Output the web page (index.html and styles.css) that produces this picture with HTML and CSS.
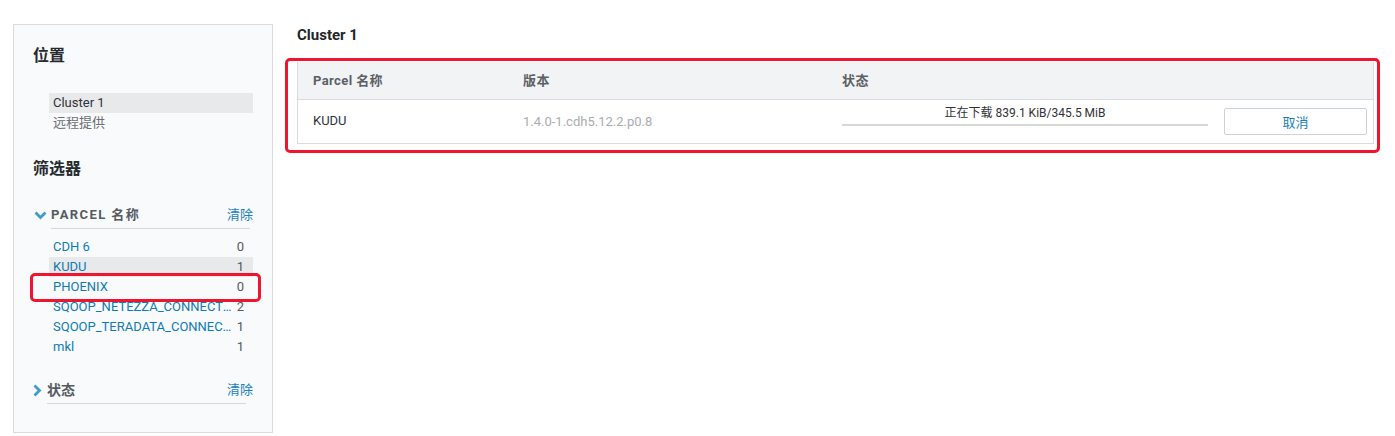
FILE: index.html
```html
<!DOCTYPE html>
<html lang="zh">
<head>
<meta charset="utf-8">
<title>Parcels</title>
<link rel="stylesheet" href="styles.css">
</head>
<body>
<div class="page">
  <aside class="sidebar">
    <h2 class="side-title">位置</h2>
    <ul class="loc-list">
      <li class="loc-item selected">Cluster 1</li>
      <li class="loc-item muted">远程提供</li>
    </ul>
    <h2 class="side-title filters-title">筛选器</h2>

    <div class="facet">
      <div class="facet-head">
        <svg class="chev chev-down" width="13" height="9" viewBox="0 0 13 9"><path d="M1.5 1.5 L6.5 6.5 L11.5 1.5" fill="none" stroke="#3f9bcc" stroke-width="2.8"/></svg>
        <div class="facet-bar">
          <span class="facet-name caps">Parcel 名称</span>
          <a class="clear">清除</a>
        </div>
      </div>
      <ul class="facet-list">
        <li class="facet-item"><span class="fname">CDH 6</span><span class="fcount">0</span></li>
        <li class="facet-item active"><span class="fname">KUDU</span><span class="fcount">1</span></li>
        <li class="facet-item marked"><span class="fname">PHOENIX</span><span class="fcount">0</span></li>
        <li class="facet-item"><span class="fname">SQOOP_NETEZZA_CONNECTOR</span><span class="fcount">2</span></li>
        <li class="facet-item"><span class="fname">SQOOP_TERADATA_CONNECTOR</span><span class="fcount">1</span></li>
        <li class="facet-item"><span class="fname">mkl</span><span class="fcount">1</span></li>
      </ul>
    </div>

    <div class="facet facet-closed">
      <div class="facet-head">
        <svg class="chev chev-right" width="9" height="13" viewBox="0 0 9 13"><path d="M1.5 1.5 L6.5 6.5 L1.5 11.5" fill="none" stroke="#3f9bcc" stroke-width="2.8"/></svg>
        <div class="facet-bar">
          <span class="facet-name">状态</span>
          <a class="clear">清除</a>
        </div>
      </div>
    </div>
  </aside>

  <main class="main">
    <h1 class="cluster-title">Cluster 1</h1>
    <div class="highlight">
      <div class="table">
        <div class="thead">
          <div class="th">Parcel 名称</div>
          <div class="th">版本</div>
          <div class="th th-wide">状态</div>
        </div>
        <div class="trow">
          <div class="td">KUDU</div>
          <div class="td version">1.4.0-1.cdh5.12.2.p0.8</div>
          <div class="td progress-cell">
            <div class="progress-text">正在下载 839.1 KiB/345.5 MiB</div>
            <div class="progress-bar"></div>
          </div>
          <div class="td action-cell">
            <button class="btn">取消</button>
          </div>
        </div>
      </div>
    </div>
  </main>
</div>
</body>
</html>
```

FILE: styles.css
```css
* { box-sizing: border-box; }

html, body {
  margin: 0;
  padding: 0;
  background: #ffffff;
}

body {
  font-family: Roboto, "Noto Sans CJK SC", "Noto Sans", sans-serif;
  font-size: 13px;
  color: #2f3336;
}

.page {
  display: flex;
  align-items: flex-start;
  gap: 12px;
  padding: 24px 15px 0 13px;
}

/* Sidebar */
.sidebar {
  width: 260px;
  flex: 0 0 260px;
  background: #f9fafb;
  border: 1px solid #d9dbde;
  padding: 19px 19px 28px 19px;
}

.side-title {
  margin: 0;
  font-size: 16px;
  line-height: 24px;
  font-weight: 700;
  color: #262a2e;
}

.filters-title {
  margin-top: 24px;
}

.loc-list {
  list-style: none;
  margin: 25px 0 0 16px;
  padding: 0;
}

.loc-item {
  height: 20px;
  line-height: 20px;
  padding-left: 4px;
  color: #2f3336;
}

.loc-item.selected {
  background: #e8e9eb;
}

.loc-item.muted {
  color: #6b6f73;
}

.facet {
  margin-top: 24px;
}

.facet-closed {
  margin-top: 23px;
}

.facet-head {
  display: flex;
  align-items: flex-start;
}

.chev {
  display: block;
  flex: 0 0 auto;
}

.chev-down {
  margin: 6px 4px 0 1px;
}

.chev-right {
  margin: 4px 5px 0 0;
}

.facet-bar {
  flex: 1;
  display: flex;
  justify-content: space-between;
  align-items: center;
  height: 24px;
  padding-bottom: 3px;
  border-bottom: 1px solid #d6d8db;
  margin-right: 3px;
}

.facet-closed .facet-bar {
  margin-right: 7px;
}

.facet-name {
  font-size: 13px;
  line-height: 20px;
  font-weight: 700;
  color: #565b61;
}

.facet-name.caps {
  text-transform: uppercase;
  letter-spacing: 1.4px;
}

.facet-closed .facet-name {
  font-size: 14px;
}

.clear {
  color: #1a7fb8;
  font-size: 13px;
  line-height: 20px;
  margin-right: -3px;
  cursor: pointer;
}

.facet-closed .clear {
  margin-right: -7px;
}

.facet-list {
  list-style: none;
  margin: 8px 0 0 16px;
  padding: 0;
}

.facet-item {
  position: relative;
  display: flex;
  align-items: center;
  height: 20px;
  line-height: 20px;
  padding: 0 9px 0 4px;
  color: #0f7ab5;
}

.facet-item.active {
  background: #e8e9eb;
}

.fname {
  flex: 1;
  min-width: 0;
  white-space: nowrap;
  overflow: hidden;
  text-overflow: ellipsis;
}

.fcount {
  flex: 0 0 auto;
  margin-left: 5px;
  color: #55595d;
}

.facet-item.marked::after {
  content: "";
  position: absolute;
  top: -4px;
  bottom: -5px;
  left: -19px;
  right: -8px;
  border: 3px solid #f0152e;
  border-radius: 5px;
  pointer-events: none;
}

/* Main */
.main {
  flex: 1;
  min-width: 0;
}

.cluster-title {
  margin: 0 0 0 12px;
  font-size: 15px;
  line-height: 22px;
  font-weight: 700;
  color: #22262a;
}

.highlight {
  margin-top: 12px;
  border: 3px solid #f0152e;
  border-radius: 5px;
  padding: 1px 3px 6px 9px;
}

.table {
  border: 1px solid #d9dbde;
  border-top: 0;
}

.thead,
.trow {
  display: grid;
  grid-template-columns: 210px 319px 1fr 165px;
}

.thead {
  height: 38px;
  background: #f2f3f5;
  border-bottom: 1px solid #d9dbde;
  align-items: center;
}

.th {
  padding-left: 15px;
  font-weight: 700;
  color: #5b6066;
  line-height: 20px;
  letter-spacing: 0.4px;
}

.th-wide {
  grid-column: 3 / 5;
}

.trow {
  height: 43px;
  align-items: center;
}

.td {
  padding-left: 15px;
  color: #2f3336;
  line-height: 20px;
}

.trow > .td:first-child {
  padding-bottom: 2px;
}

.version {
  color: #a9acaf;
}

.progress-cell {
  align-self: start;
  padding-top: 5px;
  padding-left: 15px;
}

.progress-text {
  font-size: 12px;
  line-height: 16px;
  text-align: center;
  color: #2f3336;
}

.progress-bar {
  height: 2px;
  margin-top: 3px;
  background: #d6d7da;
}

.action-cell {
  padding-left: 16px;
  padding-right: 6px;
}

.btn {
  display: block;
  width: 100%;
  height: 27px;
  background: #ffffff;
  border: 1px solid #cfd2d5;
  border-radius: 2px;
  font-family: Roboto, "Noto Sans CJK SC", sans-serif;
  font-size: 13px;
  color: #1a7fb8;
  cursor: pointer;
}
```
